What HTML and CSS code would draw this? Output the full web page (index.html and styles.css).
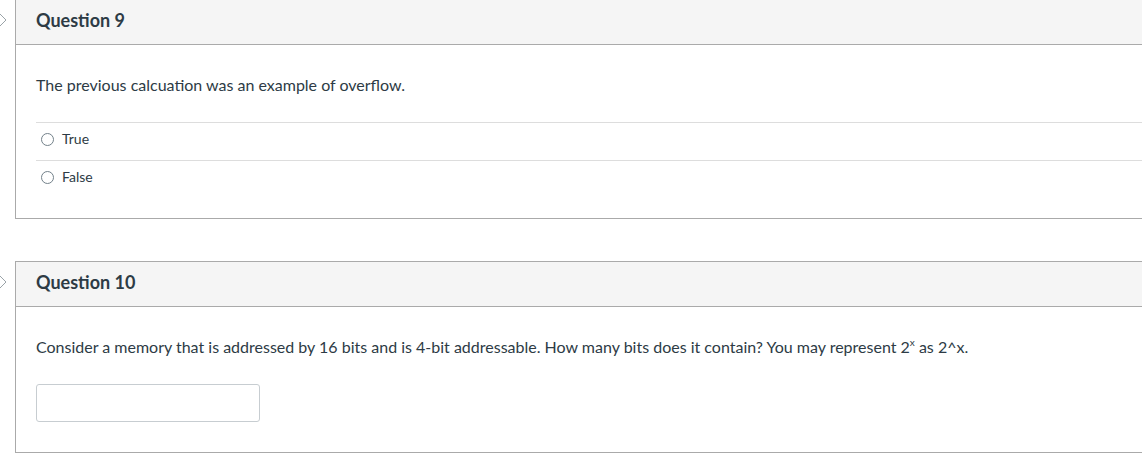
FILE: index.html
```html
<!DOCTYPE html>
<html>
<head>
<meta charset="utf-8">
<link rel="stylesheet" href="styles.css">
</head>
<body>
<div class="quiz">
  <div class="question first">
    <div class="flag">
      <svg width="12" height="14" viewBox="0 0 12 14"><path d="M3 1 L9 7 L3 13" fill="none" stroke="#9aa3a8" stroke-width="1"/></svg>
    </div>
    <div class="card">
      <div class="card-header">Question 9</div>
      <div class="card-body">
        <div class="q-text">The previous calcuation was an example of overflow.</div>
        <div class="answers">
          <label class="answer"><span class="radio"></span><span>True</span></label>
          <label class="answer"><span class="radio"></span><span>False</span></label>
        </div>
      </div>
    </div>
  </div>
  <div class="question">
    <div class="flag">
      <svg width="12" height="14" viewBox="0 0 12 14"><path d="M3 1 L9 7 L3 13" fill="none" stroke="#9aa3a8" stroke-width="1"/></svg>
    </div>
    <div class="card">
      <div class="card-header">Question 10</div>
      <div class="card-body">
        <div class="q-text">Consider a memory that is addressed by 16 bits and is 4-bit addressable. How many bits does it contain? You may represent 2<sup>x</sup> as 2^x.</div>
        <div class="input-box"></div>
      </div>
    </div>
  </div>
</div>
</body>
</html>
```
FILE: styles.css
```css
html, body {
  margin: 0;
  padding: 0;
  background: #ffffff;
  overflow: hidden;
}
body {
  font-family: Lato, "Open Sans", "Liberation Sans", sans-serif;
  color: #2d3b45;
}
.quiz {
  display: flex;
  flex-direction: column;
  gap: 42px;
  width: 1160px;
}
.question {
  display: flex;
  align-items: flex-start;
}
.question.first {
  margin-top: -1px;
}
.flag {
  width: 15px;
  height: 42px;
  display: flex;
  align-items: center;
  flex: none;
}
.flag svg {
  margin-left: -3px;
  display: block;
}
.card {
  flex: 1;
  border: 1px solid #aaaaaa;
}
.card-header {
  background: #f5f5f5;
  border-bottom: 1px solid #aaaaaa;
  box-sizing: border-box;
  height: 45px;
  padding-left: 20px;
  padding-bottom: 5px;
  display: flex;
  align-items: center;
  font-weight: 700;
  font-size: 18px;
}
.card-body {
  padding: 28px 0 20px 20px;
}
.q-text {
  font-size: 16px;
  line-height: 24px;
}
.q-text sup {
  font-size: 10px;
  line-height: 0;
  vertical-align: 7px;
}
.answers {
  margin-top: 25px;
}
.answer {
  display: flex;
  align-items: center;
  gap: 8px;
  height: 31px;
  padding-bottom: 6px;
  border-top: 1px solid #dddddd;
  font-size: 14px;
  padding-left: 5px;
}
.radio {
  width: 11px;
  height: 11px;
  border: 1px solid #73818a;
  border-radius: 50%;
  flex: none;
  margin-top: 2px;
}
.input-box {
  margin-top: 25px;
  width: 224px;
  height: 38px;
  box-sizing: border-box;
  border: 1px solid #c7cdd1;
  border-radius: 3px;
  margin-bottom: 10px;
}
```
